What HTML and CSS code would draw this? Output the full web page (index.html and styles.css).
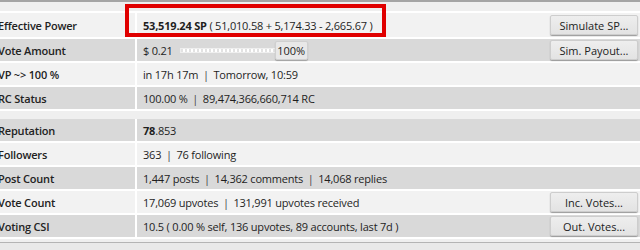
FILE: index.html
```html
<!DOCTYPE html>
<html lang="en">
<head>
    <meta charset="UTF-8">
    <title>Account Stats</title>
    <link rel="stylesheet" href="styles.css">
</head>
<body>
    <div class="top-strip"></div>
    <div class="stats">
        <div class="row light first">
            <div class="label">Effective Power</div>
            <div class="value"><b>53,519.24 SP</b> ( 51,010.58 + 5,174.33 - 2,665.67 )</div>
            <button class="btn">Simulate SP...</button>
            <div class="highlight"></div>
        </div>
        <div class="row dark">
            <div class="label">Vote Amount</div>
            <div class="value">
                <span>$ 0.21</span>
                <span class="slider"><span class="track"></span><span class="handle">100%</span></span>
            </div>
            <button class="btn">Sim. Payout...</button>
        </div>
        <div class="row light">
            <div class="label">VP ~&gt; 100 %</div>
            <div class="value">in 17h 17m <span class="sep">|</span> Tomorrow, 10:59</div>
        </div>
        <div class="row dark">
            <div class="label">RC Status</div>
            <div class="value">100.00 % <span class="sep">|</span> 89,474,366,660,714 RC</div>
        </div>
    </div>
    <div class="spacer"></div>
    <div class="stats">
        <div class="row dark">
            <div class="label">Reputation</div>
            <div class="value"><b>78</b>.853</div>
        </div>
        <div class="row light">
            <div class="label">Followers</div>
            <div class="value">363 <span class="sep">|</span> 76 following</div>
        </div>
        <div class="row dark">
            <div class="label">Post Count</div>
            <div class="value">1,447 posts <span class="sep">|</span> 14,362 comments <span class="sep">|</span> 14,068 replies</div>
        </div>
        <div class="row light">
            <div class="label">Vote Count</div>
            <div class="value">17,069 upvotes <span class="sep">|</span> 131,991 upvotes received</div>
            <button class="btn">Inc. Votes...</button>
        </div>
        <div class="row dark">
            <div class="label">Voting CSI</div>
            <div class="value">10.5 ( 0.00 % self, 136 upvotes, 89 accounts, last 7d )</div>
            <button class="btn">Out. Votes...</button>
        </div>
    </div>
    <div class="bottom-strip"></div>
</body>
</html>
```
FILE: styles.css
```css
body {
    margin: 0;
    padding: 0;
    background-color: #e9e9e9;
    font-family: "Open Sans", "Noto Sans", sans-serif;
    font-size: 11px;
    letter-spacing: -0.2px;
    color: #1e1e1e;
    overflow: hidden;
}
.top-strip {
    height: 13px;
    border-top: 2px solid #a4a4a4;
    border-bottom: 2px solid #ffffff;
    box-sizing: border-box;
    background-color: #efefef;
}
.stats {
    margin-left: -2px;
}
.row {
    position: relative;
    display: flex;
    align-items: center;
    height: 22px;
    border-bottom: 2px solid #ffffff;
}
.row.first {
    height: 24px;
}
.row.light {
    background-color: #f2f2f2;
}
.row.dark {
    background-color: #d9d9d9;
}
.label {
    width: 137px;
    height: 100%;
    display: flex;
    align-items: center;
    font-weight: 600;
    color: #222;
    border-right: 2px solid #ffffff;
    flex-shrink: 0;
}
.value {
    flex: 1;
    padding-left: 6px;
    display: flex;
    align-items: center;
    white-space: pre;
}
.value b {
    font-weight: 700;
}
.sep {
    color: #444;
    margin: 0 2px;
}
.btn {
    width: 88px;
    height: 20px;
    margin-right: 2px;
    padding: 0;
    font-family: inherit;
    font-size: 11px;
    letter-spacing: 0;
    color: #222;
    background: linear-gradient(#eeeeee, #e3e3e3);
    border: 1px solid #cdcdcd;
    border-radius: 2px;
    box-shadow: 0 1px 1px #999999;
}
.slider {
    display: flex;
    align-items: center;
    margin-left: 7px;
}
.track {
    width: 95px;
    height: 3px;
    background: repeating-linear-gradient(90deg, #e2e2e2 0 2px, #ffffff 2px 4px);
    border: 1px solid #efefef;
}
.handle {
    width: 31px;
    height: 17px;
    margin-left: -2px;
    display: flex;
    align-items: center;
    justify-content: center;
    font-size: 11px;
    letter-spacing: 0;
    background-color: #e8e8e8;
    border: 1px solid #d0d0d0;
    border-radius: 2px;
    box-shadow: 0 1px 1px #a0a0a0;
}
.highlight {
    position: absolute;
    left: 127px;
    top: -9px;
    width: 253px;
    height: 25px;
    border: 4px solid #e00000;
}
.spacer {
    height: 8px;
    background-color: #efefef;
}
.bottom-strip {
    height: 3px;
    border-bottom: 1px solid #b4b4b4;
    background-color: #efefef;
}
```
